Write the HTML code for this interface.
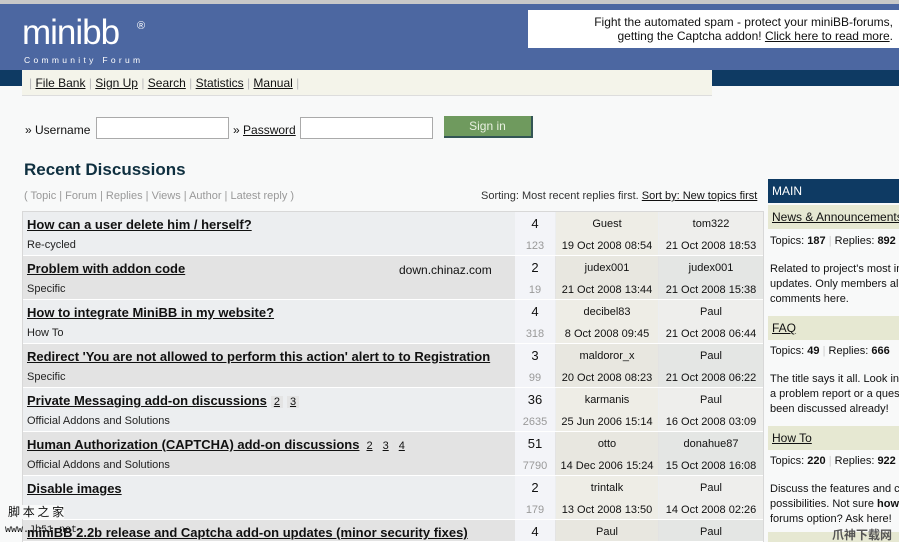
<!DOCTYPE html>
<html><head><meta charset="utf-8"><style>
*{margin:0;padding:0;box-sizing:border-box}
html,body{width:899px;height:542px;overflow:hidden}
body{background:#f8f9f9;font-family:"Liberation Sans",sans-serif;font-size:11px;color:#111;position:relative}
.a{position:absolute}
a{color:#111}
.row{position:absolute;left:23px;width:740px;height:44px;border-bottom:1px solid #fff;overflow:hidden}
.c{position:absolute;top:0;height:44px;text-align:center;font-size:11px;white-space:nowrap}
.c div{height:22px;line-height:24px}
.n div:first-child{font-size:13px}
.t1{position:absolute;left:4px;top:5px;font-weight:bold;font-size:13px;text-decoration:underline;white-space:nowrap;color:#111}
.t2{position:absolute;left:4px;top:27px;font-size:11px;color:#222}
.g{color:#999}
.pg{display:inline-block;background:#e4e4e4;padding:0 3px;margin-left:4px;font-weight:normal;font-size:11px;text-decoration:underline}
.sb{font-size:11px;color:#111}
#side{position:absolute;left:768px;top:179px;width:131px;height:363px;overflow:hidden}
#side .a{white-space:nowrap}
</style></head><body>
<div class="a" style="left:0;top:0;width:899px;height:4px;background:#c8c8c8"></div>
<div class="a" style="left:0;top:4px;width:899px;height:66px;background:#4c67a1"></div>
<div class="a" style="left:0;top:70px;width:899px;height:16px;background:#0e3a63"></div>
<div class="a" style="left:22px;top:13px;color:#fff;font-size:35px;letter-spacing:-1px">minibb</div>
<div class="a" style="left:137px;top:20px;color:#fff;font-size:11px">®</div>
<div class="a" style="left:24px;top:55px;color:#fff;font-size:8.5px;letter-spacing:3.3px">Community Forum</div>
<div class="a" style="left:528px;top:10px;width:371px;height:38px;background:#fff;text-align:right;font-size:12px;line-height:14px;padding:5px 6px 0 0;white-space:nowrap">Fight the automated spam - protect your miniBB-forums,<br>getting the Captcha addon! <a href="#">Click here to read more</a>.</div>
<div class="a" style="left:22px;top:70px;width:690px;height:26px;background:#f4f4ea;border-bottom:1px solid #ddd;font-size:12px;line-height:27px;padding-left:7px;color:#bbb">| <a href="#">File Bank</a> | <a href="#">Sign Up</a> | <a href="#">Search</a> | <a href="#">Statistics</a> | <a href="#">Manual</a> |</div>
<div class="a" style="left:25px;top:123px;font-size:12px">» Username</div>
<div class="a" style="left:96px;top:117px;width:133px;height:22px;background:#fff;border:1px solid #aaa"></div>
<div class="a" style="left:233px;top:123px;font-size:12px">» <a href="#">Password</a></div>
<div class="a" style="left:300px;top:117px;width:133px;height:22px;background:#fff;border:1px solid #aaa"></div>
<div class="a" style="left:444px;top:116px;width:89px;height:22px;background:#6f9a5e;border-right:2px solid #355;border-bottom:2px solid #355;color:#e8f0e0;font-size:12px;text-align:center;line-height:21px">Sign in</div>
<div class="a" style="left:24px;top:160px;font-size:17px;font-weight:bold;color:#0f3040">Recent Discussions</div>
<div class="a" style="left:24px;top:190px;font-size:11px;color:#999">( Topic | Forum | Replies | Views | Author | Latest reply )</div>
<div class="a" style="left:481px;top:190px;font-size:11px;color:#333;white-space:nowrap">Sorting: Most recent replies first. <a href="#">Sort by: New topics first</a></div>
<div class="a" style="left:22px;top:211px;width:742px;height:331px;background:#d8d8d8"></div>

<div class="row" style="top:212px;background:#eceef0"><span class="t1">How can a user delete him / herself?</span><span class="t2">Re-cycled</span>
<div class="c n" style="left:492px;width:40px;background:#f3f4f8"><div>4</div><div class="g">123</div></div>
<div class="c" style="left:533px;width:102px;background:#eeede6"><div>Guest</div><div>19 Oct 2008 08:54</div></div>
<div class="c" style="left:636px;width:104px;background:#eeeeec"><div>tom322</div><div>21 Oct 2008 18:53</div></div></div>

<div class="row" style="top:256px;background:#e3e3e3"><span class="t1">Problem with addon code</span><span class="t2">Specific</span><span class="a" style="left:376px;top:7px;font-size:12px">down.chinaz.com</span>
<div class="c n" style="left:492px;width:40px;background:#f3f4f8"><div>2</div><div class="g">19</div></div>
<div class="c" style="left:533px;width:102px;background:#e8e7e0"><div>judex001</div><div>21 Oct 2008 13:44</div></div>
<div class="c" style="left:636px;width:104px;background:#e4e6e4"><div>judex001</div><div>21 Oct 2008 15:38</div></div></div>

<div class="row" style="top:300px;background:#eceef0"><span class="t1">How to integrate MiniBB in my website?</span><span class="t2">How To</span>
<div class="c n" style="left:492px;width:40px;background:#f3f4f8"><div>4</div><div class="g">318</div></div>
<div class="c" style="left:533px;width:102px;background:#eeede6"><div>decibel83</div><div>8 Oct 2008 09:45</div></div>
<div class="c" style="left:636px;width:104px;background:#eeeeec"><div>Paul</div><div>21 Oct 2008 06:44</div></div></div>

<div class="row" style="top:344px;background:#e3e3e3"><span class="t1">Redirect 'You are not allowed to perform this action' alert to to Registration</span><span class="t2">Specific</span>
<div class="c n" style="left:492px;width:40px;background:#f3f4f8"><div>3</div><div class="g">99</div></div>
<div class="c" style="left:533px;width:102px;background:#e8e7e0"><div>maldoror_x</div><div>20 Oct 2008 08:23</div></div>
<div class="c" style="left:636px;width:104px;background:#e4e6e4"><div>Paul</div><div>21 Oct 2008 06:22</div></div></div>

<div class="row" style="top:388px;background:#eceef0"><span class="t1">Private Messaging add-on discussions<span class="pg">2</span><span class="pg">3</span></span><span class="t2">Official Addons and Solutions</span>
<div class="c n" style="left:492px;width:40px;background:#f3f4f8"><div>36</div><div class="g">2635</div></div>
<div class="c" style="left:533px;width:102px;background:#eeede6"><div>karmanis</div><div>25 Jun 2006 15:14</div></div>
<div class="c" style="left:636px;width:104px;background:#eeeeec"><div>Paul</div><div>16 Oct 2008 03:09</div></div></div>

<div class="row" style="top:432px;background:#e3e3e3"><span class="t1">Human Authorization (CAPTCHA) add-on discussions<span class="pg">2</span><span class="pg">3</span><span class="pg">4</span></span><span class="t2">Official Addons and Solutions</span>
<div class="c n" style="left:492px;width:40px;background:#f3f4f8"><div>51</div><div class="g">7790</div></div>
<div class="c" style="left:533px;width:102px;background:#e8e7e0"><div>otto</div><div>14 Dec 2006 15:24</div></div>
<div class="c" style="left:636px;width:104px;background:#e4e6e4"><div>donahue87</div><div>15 Oct 2008 16:08</div></div></div>

<div class="row" style="top:476px;background:#eceef0"><span class="t1">Disable images</span>
<div class="c n" style="left:492px;width:40px;background:#f3f4f8"><div>2</div><div class="g">179</div></div>
<div class="c" style="left:533px;width:102px;background:#eeede6"><div>trintalk</div><div>13 Oct 2008 13:50</div></div>
<div class="c" style="left:636px;width:104px;background:#eeeeec"><div>Paul</div><div>14 Oct 2008 02:26</div></div></div>

<div class="row" style="top:520px;height:22px;background:#e3e3e3"><span class="t1">miniBB 2.2b release and Captcha add-on updates (minor security fixes)</span>
<div class="c n" style="left:492px;width:40px;background:#f3f4f8"><div>4</div></div>
<div class="c" style="left:533px;width:102px;background:#e8e7e0"><div>Paul</div></div>
<div class="c" style="left:636px;width:104px;background:#e4e6e4"><div>Paul</div></div></div>

<div class="a" style="left:8px;top:505px;font-size:12px;font-family:'Noto Sans CJK SC',sans-serif;background:#f8f9f9;line-height:14px">脚 本 之 家</div>
<div class="a" style="left:5px;top:525px;font-size:10px;font-family:'Liberation Mono',monospace">www.Jb51.net</div>

<div id="side">
<div class="a" style="left:0;top:0;width:131px;height:24px;background:#0e3a63;color:#fff;font-size:12px;line-height:24px;padding-left:4px">MAIN</div>
<div class="a" style="left:0;top:26px;width:131px;height:24px;background:#e6e8d2;font-size:12px;line-height:24px;padding-left:4px"><a href="#">News &amp; Announcements</a></div>
<div class="a sb" style="left:2px;top:56px">Topics: <b>187</b> <span style="color:#ccc">|</span> Replies: <b>892</b></div>
<div class="a sb" style="left:2px;top:83px;line-height:15px">Related to project's most important<br>updates. Only members allowed<br>comments here.</div>
<div class="a" style="left:0;top:137px;width:131px;height:24px;background:#e6e8d2;font-size:12px;line-height:24px;padding-left:4px"><a href="#">FAQ</a></div>
<div class="a sb" style="left:2px;top:166px">Topics: <b>49</b> <span style="color:#ccc">|</span> Replies: <b>666</b></div>
<div class="a sb" style="left:2px;top:193px;line-height:15px">The title says it all. Look in here<br>a problem report or a question<br>been discussed already!</div>
<div class="a" style="left:0;top:247px;width:131px;height:24px;background:#e6e8d2;font-size:12px;line-height:24px;padding-left:4px"><a href="#">How To</a></div>
<div class="a sb" style="left:2px;top:276px">Topics: <b>220</b> <span style="color:#ccc">|</span> Replies: <b>922</b></div>
<div class="a sb" style="left:2px;top:303px;line-height:15px">Discuss the features and common<br>possibilities. Not sure <b>how</b> to<br>forums option? Ask here!</div>
<div class="a" style="left:0;top:353px;width:131px;height:10px;background:#e6e8d2"></div>
<div class="a" style="left:64px;top:347px;font-size:12px;font-weight:bold;color:#555;font-family:'Noto Sans CJK SC',sans-serif">爪神下载网</div>
</div>
</body></html>
